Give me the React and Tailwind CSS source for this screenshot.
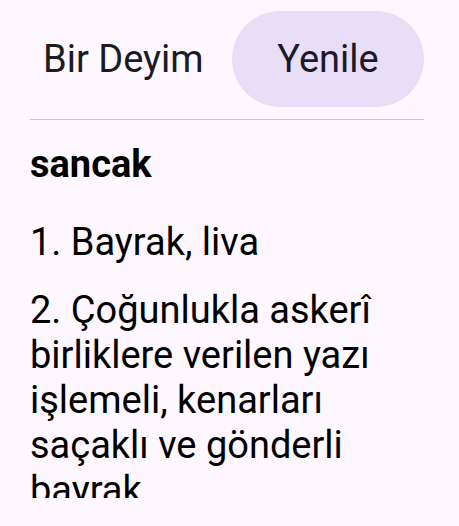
export default function App() {
  return (
    <div className="h-[526px] w-[459px] overflow-hidden bg-[#FEF7FF] font-['Roboto',sans-serif] text-[#1C1B1F]">
      <div className="pl-[30px] pr-[35px]">
        <div className="mt-[11px] flex h-[96px] items-center">
          <span className="pl-[13px] text-[38px] leading-[45px] text-[#1C1B1F]">Bir Deyim</span>
          <button className="ml-auto flex h-[96px] w-[192px] items-center justify-center rounded-full bg-[#E8DEF8] text-[38px] leading-[45px] text-[#1D192B]">
            Yenile
          </button>
        </div>
        <div className="mt-[12px] h-px bg-[#CAC4D0]" />
        <div className="h-[378px] overflow-hidden text-[38px] leading-[45px] text-black">
          <div className="mt-[22px] font-bold">sancak</div>
          <div className="mt-[33px]">1. Bayrak, liva</div>
          <div className="mt-[23px]">2. Çoğunlukla askerî birliklere verilen yazı işlemeli, kenarları saçaklı ve gönderli bayrak</div>
        </div>
      </div>
    </div>
  );
}
